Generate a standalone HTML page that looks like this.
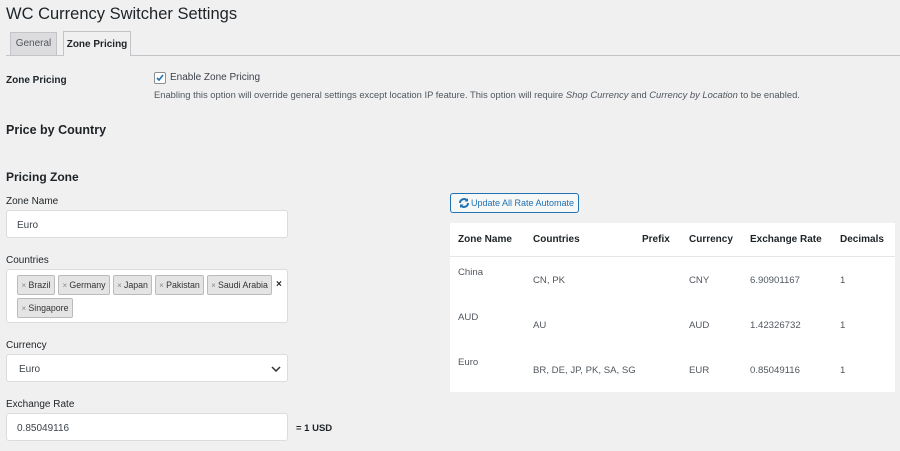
<!DOCTYPE html>
<html><head><style>
*{box-sizing:border-box;margin:0;padding:0}
body{width:900px;height:451px;background:#f0f0f1;font-family:"Liberation Sans",sans-serif;color:#1d2327;position:relative;overflow:hidden;font-size:10px}
.a{position:absolute;white-space:nowrap}
.b{font-weight:bold}
.in{position:absolute;background:#fff;border:1px solid #dcdcde;border-radius:3px}
.tag{position:absolute;background:#e4e4e4;border:1px solid #bbb;border-radius:2px;height:20px;line-height:18px;font-size:8.8px;color:#333;text-align:center;white-space:nowrap;overflow:hidden}
.tag i{font-style:normal;color:#888;font-size:8px}
</style></head><body>
<div class="a" style="left:6px;top:5px;font-size:16.5px;color:#1d2327">WC Currency Switcher Settings</div>
<div class="a" style="left:10px;top:32px;width:47px;height:23px;background:#dcdcde;border:1px solid #c3c4c7;border-bottom:none;font-size:10px;line-height:22px;text-align:center;color:#50575e">General</div>
<div class="a b" style="left:63px;top:31px;width:68px;height:25px;background:#f0f0f1;border:1px solid #c3c4c7;border-bottom:none;font-size:10px;line-height:25px;text-align:center;z-index:2">Zone Pricing</div>
<div class="a" style="left:6px;top:55px;width:894px;height:1px;background:#c3c4c7"></div>
<div class="a b" style="left:6px;top:75px;font-size:10px">Zone Pricing</div>
<div class="a" style="left:154px;top:72px;width:12px;height:12px;background:#fff;border:1px solid #8c8f94;border-radius:2px"><svg width="10" height="10" viewBox="0 0 10 10" style="position:absolute;left:0;top:0"><path d="M2 5l2 2 4-5" stroke="#2271b1" stroke-width="1.6" fill="none"/></svg></div>
<div class="a" style="left:170px;top:72px;font-size:10px;color:#3c434a">Enable Zone Pricing</div>
<div class="a" style="left:154px;top:89px;font-size:9.4px;color:#50575e">Enabling this option will override general settings except location IP feature. This option will require <i>Shop Currency</i> and <i>Currency by Location</i> to be enabled.</div>
<div class="a b" style="left:6px;top:123px;font-size:12.5px">Price by Country</div>
<div class="a b" style="left:6px;top:170px;font-size:12px">Pricing Zone</div>
<div class="a" style="left:6px;top:196px;font-size:10px">Zone Name</div>
<div class="in" style="left:6px;top:210px;width:282px;height:28px;padding:9px 10px;font-size:10px;color:#3c434a">Euro</div>
<div class="a" style="left:6px;top:255px;font-size:10px">Countries</div>
<div class="in" style="left:6px;top:269px;width:282px;height:54px"></div>
<div class="tag" style="left:17px;top:275px;width:38px"><i>× </i>Brazil</div>
<div class="tag" style="left:58px;top:275px;width:52px"><i>× </i>Germany</div>
<div class="tag" style="left:113px;top:275px;width:39px"><i>× </i>Japan</div>
<div class="tag" style="left:155px;top:275px;width:49px"><i>× </i>Pakistan</div>
<div class="tag" style="left:207px;top:275px;width:65px"><i>× </i>Saudi Arabia</div>
<div class="a b" style="left:276px;top:279px;font-size:10px">×</div>
<div class="tag" style="left:17px;top:298px;width:56px"><i>× </i>Singapore</div>
<div class="a" style="left:6px;top:340px;font-size:10px">Currency</div>
<div class="in" style="left:6px;top:354px;width:282px;height:28px;padding:9px 12px;font-size:10px;color:#3c434a">Euro<svg width="10" height="6" viewBox="0 0 10 6" style="position:absolute;right:6px;top:11px"><path d="M1 1l4 4 4-4" stroke="#333" stroke-width="1.5" fill="none"/></svg></div>
<div class="a" style="left:6px;top:399px;font-size:10px">Exchange Rate</div>
<div class="in" style="left:6px;top:413px;width:282px;height:28px;padding:9px 10px;font-size:10px;color:#3c434a">0.85049116</div>
<div class="a b" style="left:296px;top:423px;font-size:9.5px">= 1 USD</div>
<div class="a" style="left:450px;top:193px;width:129px;height:20px;border:1px solid #2271b1;border-radius:3px;background:#f6f7f7;color:#2271b1;font-size:9px;line-height:18px;padding-left:20px">Update All Rate Automate<svg width="12" height="12" viewBox="0 0 12 12" style="position:absolute;left:7px;top:3px"><path d="M2 6a4 4 0 0 1 7-2.6M10 6a4 4 0 0 1-7 2.6" stroke="#2271b1" stroke-width="2" fill="none"/><path d="M10 1v3.5H6.5zM2 11V7.5h3.5z" fill="#2271b1"/></svg></div>
<div class="a" style="left:450px;top:223px;width:445px;height:169px;background:#fff"></div>
<div class="a" style="left:450px;top:256px;width:445px;height:1px;background:#e5e5e5"></div>
<div class="a b" style="left:458px;top:234px;font-size:10px">Zone Name</div>
<div class="a b" style="left:533px;top:234px;font-size:10px">Countries</div>
<div class="a b" style="left:642px;top:234px;font-size:10px">Prefix</div>
<div class="a b" style="left:689px;top:234px;font-size:10px">Currency</div>
<div class="a b" style="left:750px;top:234px;font-size:10px">Exchange Rate</div>
<div class="a b" style="left:840px;top:234px;font-size:10px">Decimals</div>
<div style="color:#50575e;font-size:9.6px">
<div class="a" style="left:458px;top:267px">China</div><div class="a" style="left:533px;top:275px">CN, PK</div><div class="a" style="left:689px;top:275px">CNY</div><div class="a" style="left:750px;top:275px">6.90901167</div><div class="a" style="left:840px;top:275px">1</div>
<div class="a" style="left:458px;top:312px">AUD</div><div class="a" style="left:533px;top:320px">AU</div><div class="a" style="left:689px;top:320px">AUD</div><div class="a" style="left:750px;top:320px">1.42326732</div><div class="a" style="left:840px;top:320px">1</div>
<div class="a" style="left:458px;top:357px">Euro</div><div class="a" style="left:533px;top:365px">BR, DE, JP, PK, SA, SG</div><div class="a" style="left:689px;top:365px">EUR</div><div class="a" style="left:750px;top:365px">0.85049116</div><div class="a" style="left:840px;top:365px">1</div>
</div>
</body></html>
